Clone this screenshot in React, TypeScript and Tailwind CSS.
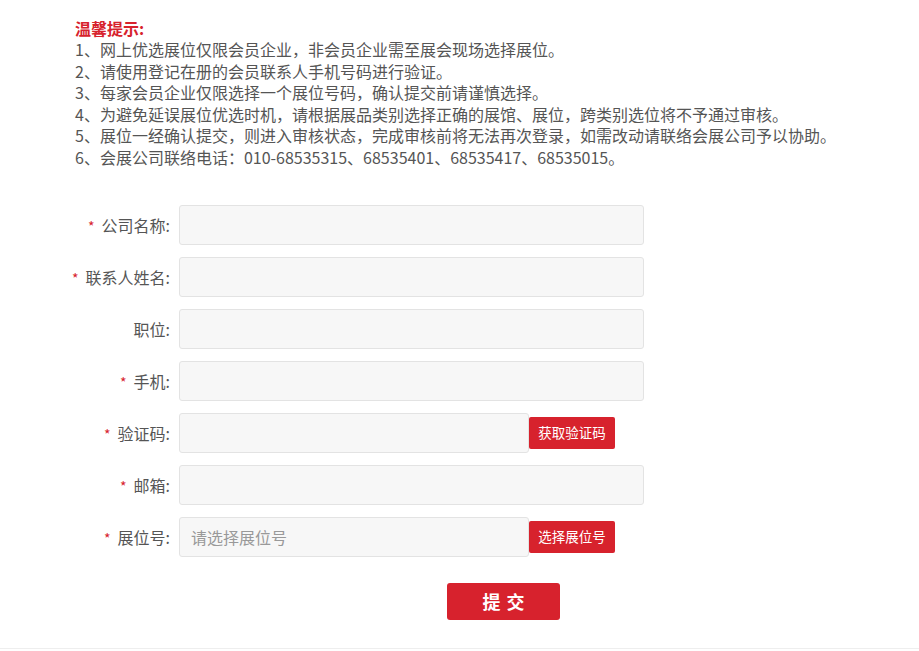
import { ReactNode } from 'react'

const tips = [
  '1、网上优选展位仅限会员企业，非会员企业需至展会现场选择展位。',
  '2、请使用登记在册的会员联系人手机号码进行验证。',
  '3、每家会员企业仅限选择一个展位号码，确认提交前请谨慎选择。',
  '4、为避免延误展位优选时机，请根据展品类别选择正确的展馆、展位，跨类别选位将不予通过审核。',
  '5、展位一经确认提交，则进入审核状态，完成审核前将无法再次登录，如需改动请联络会展公司予以协助。',
  '6、会展公司联络电话：010-68535315、68535401、68535417、68535015。',
]

function Row({ label, required, children }: { label: string; required?: boolean; children: ReactNode }) {
  return (
    <div className="flex h-10 items-center">
      <label className="w-[179px] shrink-0 pr-[9px] text-right text-[16px] text-[#555]">
        {required ? <span className="mr-[7px] text-[14px] text-[#d7222d]">*</span> : null}
        {label}:
      </label>
      {children}
    </div>
  )
}

function Field({ placeholder }: { placeholder?: string }) {
  return (
    <input
      className="h-10 w-[465px] rounded-[3px] border border-[#e3e3e3] bg-[#f7f7f7] px-[11px] text-[16px] text-[#555] outline-none placeholder:text-[#999]"
      placeholder={placeholder}
    />
  )
}

function FieldWithButton({ placeholder, action }: { placeholder?: string; action: string }) {
  return (
    <div className="flex items-center">
      <input
        className="h-10 w-[350px] rounded-[3px] border border-[#e3e3e3] bg-[#f7f7f7] px-[11px] text-[16px] text-[#555] outline-none placeholder:text-[#999]"
        placeholder={placeholder}
      />
      <button className="h-[32px] w-[86px] rounded-[2px] bg-[#d7222d] text-[13.5px] text-white">{action}</button>
    </div>
  )
}

export default function App() {
  return (
    <div
      className="relative h-[651px] w-[919px] bg-white"
      style={{ fontFamily: '"Microsoft YaHei", "Noto Sans CJK SC", sans-serif' }}
    >
      <div className="pl-[75px] pt-[17px]">
        <p className="text-[16px] font-bold leading-[22px] text-[#d7222d]">温馨提示:</p>
        <div className="text-[16px] leading-[21.6px] text-[#555]">
          {tips.map(t => (
            <p key={t}>{t}</p>
          ))}
        </div>
      </div>

      <form className="mt-[36px] flex flex-col gap-3" onSubmit={e => e.preventDefault()}>
        <Row label="公司名称" required>
          <Field />
        </Row>
        <Row label="联系人姓名" required>
          <Field />
        </Row>
        <Row label="职位">
          <Field />
        </Row>
        <Row label="手机" required>
          <Field />
        </Row>
        <Row label="验证码" required>
          <FieldWithButton action="获取验证码" />
        </Row>
        <Row label="邮箱" required>
          <Field />
        </Row>
        <Row label="展位号" required>
          <FieldWithButton placeholder="请选择展位号" action="选择展位号" />
        </Row>
        <div className="mt-[14px] pl-[447px]">
          <button className="h-[37px] w-[113px] rounded-[3px] bg-[#d7222d] pl-[6px] text-[18px] font-bold tracking-[6px] text-white">
            提交
          </button>
        </div>
      </form>

      <div className="absolute bottom-[2px] left-0 right-0 border-t border-[#eee]" />
    </div>
  )
}
